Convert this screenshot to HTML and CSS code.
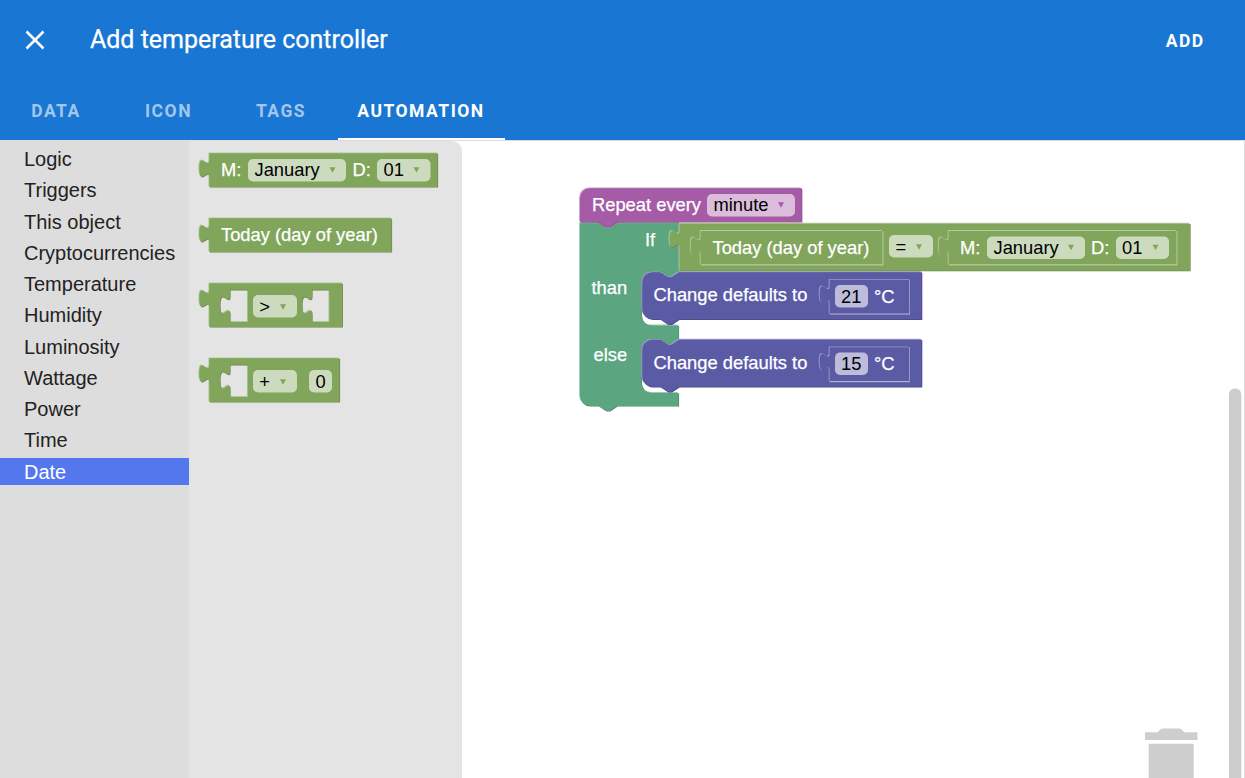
FILE: index.html
```html
<!DOCTYPE html>
<html lang="en">
<head>
<meta charset="utf-8">
<title>Add temperature controller</title>
<link rel="stylesheet" href="styles.css">
</head>
<body>
<header class="header">
  <div class="toolbar">
    <svg class="close" viewBox="0 0 20 20"><path d="M1.5 1.5L18.5 18.5M18.5 1.5L1.5 18.5"/></svg>
    <h1 class="title">Add temperature controller</h1>
    <span class="add">ADD</span>
  </div>
  <nav class="tabs">
    <span class="tab">DATA</span>
    <span class="tab">ICON</span>
    <span class="tab">TAGS</span>
    <span class="tab active">AUTOMATION</span>
  </nav>
</header>
<main class="editor">
  <ul class="categories">
    <li>Logic</li><li>Triggers</li><li>This object</li><li>Cryptocurrencies</li><li>Temperature</li><li>Humidity</li><li>Luminosity</li><li>Wattage</li><li>Power</li><li>Time</li><li class="selected">Date</li>
  </ul>
  <div class="flyout">
    <svg class="canvas" width="273" height="637" viewBox="189 141 273 637">
      <defs>
        <path id="date" d="M209.3 153.3H437.5V187H209.3V178c0-12.5-10 10-10-9.4s10 3.1 10-9.4z"/>
        <path id="today" d="M209.3 218.3H391.5V252H209.3V243c0-12.5-10 10-10-9.4s10 3.1 10-9.4z"/>
        <path id="compare" fill-rule="evenodd" d="M209.3 283.3H342.3V327H209.3V308c0-12.5-10 10-10-9.4s10 3.1 10-9.4zM230 289.8H247.8V322H230V314.5c0-12.5-10 10-10-9.4s10 3.1 10-9.4zM312 289.8H329.3V322H312V314.5c0-12.5-10 10-10-9.4s10 3.1 10-9.4z"/>
        <path id="math" fill-rule="evenodd" d="M209.3 358.3H339.5V402H209.3V383c0-12.5-10 10-10-9.4s10 3.1 10-9.4zM230 364.8H247.8V397H230V389.5c0-12.5-10 10-10-9.4s10 3.1 10-9.4z"/>
        <path id="arrow" d="M.5 .3H6.5L3.5 5.8z"/>
      </defs>
      <g class="olive">
        <use href="#date" class="light"/><use href="#date" class="dark"/><use href="#date" class="fill"/>
        <use href="#today" class="light"/><use href="#today" class="dark"/><use href="#today" class="fill"/>
        <use href="#compare" class="light"/><use href="#compare" class="dark"/><use href="#compare" class="fill"/>
        <use href="#math" class="light"/><use href="#math" class="dark"/><use href="#math" class="fill"/>
        <rect class="field" x="248" y="159" width="98" height="22.5" rx="5"/>
        <rect class="field" x="377" y="159" width="53.5" height="22.5" rx="5"/>
        <rect class="field" x="253" y="295" width="44" height="22.5" rx="5"/>
        <rect class="field" x="253" y="370" width="44" height="22.5" rx="5"/>
        <rect class="field" x="309" y="370" width="23" height="22.5" rx="5"/>
        <use href="#arrow" class="fill" x="329" y="167"/>
        <use href="#arrow" class="fill" x="413" y="167"/>
        <use href="#arrow" class="fill" x="279.5" y="304"/>
        <use href="#arrow" class="fill" x="279.5" y="379"/>
      </g>
      <text class="label" x="221" y="176">M:</text><text class="value" x="254.5" y="176">January</text>
      <text class="label" x="352.5" y="176">D:</text><text class="value" x="383.5" y="176">01</text>
      <text class="label" x="221" y="241">Today (day of year)</text>
      <text class="value" x="259.3" y="312.5">&gt;</text>
      <text class="value" x="259.3" y="387.5">+</text>
      <text class="value" x="315.5" y="387.5">0</text>
    </svg>
  </div>
  <section class="workspace">
    <svg class="canvas" width="783" height="637" viewBox="462 141 783 637">
      <defs>
        <path id="repeat" d="M580 198.3a10 10 0 0 1 10-10H801.7V222H617.2l-7.5 5h-3.7l-7.5-5H580z"/>
        <path id="branch" d="M580 223.2H598.5l7.5 5h3.7l7.5-5H679V229.3c0 12.5-10-10-10 9.4s10-3.1 10 9.4V271.3l-7.5 5h-3.7l-7.5-5H651.5a10 10 0 0 0-10 10V315.5a10 10 0 0 0 10 10H678.5V338.8l-7.5 5h-3.7l-7.5-5H651.5a10 10 0 0 0-10 10V383a10 10 0 0 0 10 10H678.5V406H617.2l-7.5 5h-3.7l-7.5-5H590a10 10 0 0 1-10-10z"/>
        <path id="equals" fill-rule="evenodd" d="M679.5 223.7H1190V270.7H679.5V248.5c0-12.5-10 10-10-9.4s10 3.1 10-9.4zM700 230.2H883.5V265.5H700V255.2c0-12.5-10 10-10-9.4s10 3.1 10-9.4zM948 230.2H1177.5V265.5H948V255.2c0-12.5-10 10-10-9.4s10 3.1 10-9.4z"/>
        <path id="nested-today" d="M700.6 231H882.7V264.5H700.6V255.2c0-12.5-10 10-10-9.4s10 3.1 10-9.4z"/>
        <path id="nested-date" d="M948.6 231H1176.7V264.5H948.6V255.2c0-12.5-10 10-10-9.4s10 3.1 10-9.4z"/>
        <path id="defaults" fill-rule="evenodd" d="M652.3 272.2H660.3l7.5 5h3.7l7.5-5H921.7V319.3H679l-7.5 5h-3.7l-7.5-5H652.3a10 10 0 0 1-10-10V282a10 10 0 0 1 10-9.8zM829 279H910V314.8H829V304c0-12.5-10 10-10-9.4s10 3.1 10-9.4z"/>
        <path id="degrees" d="M829.6 279.8H909.2V313.8H829.6V304c0-12.5-10 10-10-9.4s10 3.1 10-9.4z"/>
        <g id="change">
          <use href="#defaults" class="light"/><use href="#defaults" class="dark"/><use href="#defaults" class="fill"/>
          <use href="#degrees" class="light"/><use href="#degrees" class="fill"/>
          <rect class="field" x="835" y="285" width="33" height="22.5" rx="5"/>
        </g>
      </defs>
      <path class="seam" d="M581 221h98v3h-60l-7 5h-8l-8-5h-15z"/>
      <g class="teal"><use href="#branch" class="light"/><use href="#branch" class="dark"/><use href="#branch" class="fill"/></g>
      <g class="purple">
        <use href="#repeat" class="light"/><use href="#repeat" class="dark"/><use href="#repeat" class="fill"/>
        <rect class="field" x="707" y="194" width="88" height="22.5" rx="5"/>
        <use href="#arrow" class="fill" x="777.5" y="202"/>
      </g>
      <g class="indigo">
        <use href="#change"/>
        <use href="#change" y="67.5"/>
      </g>
      <g class="olive">
        <use href="#equals" class="light"/><use href="#equals" class="dark"/><use href="#equals" class="fill"/>
        <use href="#nested-today" class="light"/><use href="#nested-today" class="fill"/>
        <use href="#nested-date" class="light"/><use href="#nested-date" class="fill"/>
        <rect class="field" x="889" y="235" width="44" height="22.5" rx="5"/>
        <rect class="field" x="987" y="236.5" width="98" height="22.5" rx="5"/>
        <rect class="field" x="1116" y="236.5" width="53" height="22.5" rx="5"/>
        <use href="#arrow" class="fill" x="915.5" y="244"/>
        <use href="#arrow" class="fill" x="1067.5" y="244.5"/>
        <use href="#arrow" class="fill" x="1152" y="244.5"/>
      </g>
      <text class="label" x="592" y="211">Repeat every</text><text class="value" x="713.5" y="211">minute</text>
      <text class="label" x="645" y="246">If</text>
      <text class="label" x="712.5" y="254">Today (day of year)</text><text class="value" x="895.5" y="252.5">=</text>
      <text class="label" x="960" y="254">M:</text><text class="value" x="993.5" y="254">January</text>
      <text class="label" x="1091" y="254">D:</text><text class="value" x="1122" y="254">01</text>
      <text class="label" x="591.5" y="294">than</text><text class="label" x="593.5" y="361">else</text>
      <text class="label" x="653.5" y="301">Change defaults to</text><text class="value" x="841" y="303">21</text><text class="label" x="874" y="303">°C</text>
      <text class="label" x="653.5" y="369">Change defaults to</text><text class="value" x="841" y="370">15</text><text class="label" x="874" y="370">°C</text>
      <path class="trash" d="M1145 740V732.3H1158q2-3.8 5-3.8H1179q3 0 5 3.8H1197.5V740zM1148.7 743.7H1193.7V778H1148.7z"/>
      <rect class="scroll" x="1229" y="388.5" width="12.3" height="410" rx="6"/>
      <path class="edge" d="M1244.5 141V778"/>
    </svg>
  </section>
</main>
</body>
</html>
```
FILE: styles.css
```css
* { box-sizing: border-box; }
body { margin: 0; width: 1245px; height: 778px; overflow: hidden; display: flex; flex-direction: column; background: #fff; font-family: "Liberation Sans", Arial, sans-serif; }
.header { height: 140px; background: #1976d2; color: #fff; font-family: Roboto, sans-serif; display: flex; flex-direction: column; justify-content: space-between; }
.toolbar { height: 80px; display: flex; align-items: center; padding: 0 40.5px 0 25px; }
.close { width: 20px; height: 20px; fill: none; stroke: #fff; stroke-width: 2.5; }
.title { margin: 0 auto 0 45px; font-size: 25px; font-weight: 400; letter-spacing: -.02px; -webkit-text-stroke: .25px #fff; padding-bottom: 1px; }
.add { font-size: 17.5px; font-weight: 700; letter-spacing: 1.4px; padding-top: 2px; }
.tabs { display: flex; height: 60px; }
.tab { min-width: 112.5px; padding: 2px 20px 0 19.5px; display: flex; align-items: center; justify-content: center; font-size: 17.5px; font-weight: 700; letter-spacing: 1.5px; color: rgba(255,255,255,.6); }
.tab.active { width: 167.5px; color: #fff; border-bottom: 2px solid #fff; padding-top: 4px; }
.editor { display: flex; flex: 1; min-height: 0; border-top: 1px solid #dcdce0; }
.categories { list-style: none; margin: 0; padding: 4.5px 0 0; width: 189px; background: #ddd; color: #222; font-size: 20px; line-height: 27px; }
.categories li { padding: .6px 0 0 24px; height: 27px; margin-bottom: 4.25px; white-space: nowrap; }
.categories .selected { background: #57e; color: #fff; }
.flyout { width: 273px; background: #e4e4e4; border-top-right-radius: 10px; }
.workspace { flex: 1; }
.canvas { display: block; }
.olive { --base: #80a55b; --hi: #b3c99d; --lo: #66844a; }
.purple { --base: #a55ba5; --hi: #c99dc9; --lo: #844984; }
.teal { --base: #5ba580; --hi: #9dc9b3; --lo: #498466; }
.indigo { --base: #5b5ba5; --hi: #9d9dc9; --lo: #494984; }
.seam { fill: #844984; }
.fill { fill: var(--base); }
.light { fill: var(--hi); transform: translate(-.9px, -.9px); }
.dark { fill: var(--lo); transform: translate(.6px, .6px); }
.field { fill: #fff; fill-opacity: .6; }
.label, .value { font-size: 18.33px; }
.label { fill: #fff; stroke: #fff; stroke-width: .25px; }
.value { fill: #000; }
.trash { fill: #cecece; }
.scroll { fill: #ccc; }
.edge { stroke: #ddd; }
```
